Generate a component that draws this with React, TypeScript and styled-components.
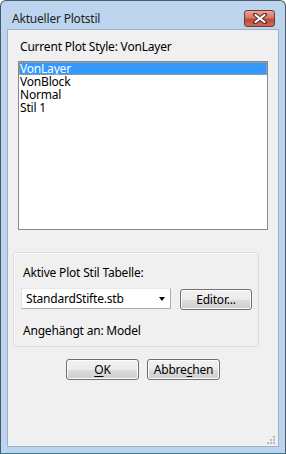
import styled, { createGlobalStyle } from "styled-components";

const GlobalStyle = createGlobalStyle`
  html, body {
    margin: 0;
    padding: 0;
    background: #ffffff;
  }
  body {
    font-family: "Noto Sans", "Open Sans", sans-serif;
    font-size: 12px;
    color: #000000;
  }
`;

const StyledWindow = styled.div`
  box-sizing: border-box;
  width: 286px;
  height: 454px;
  display: flex;
  flex-direction: column;
  padding: 0 6px 6px 6px;
  background: #bcd4ed;
  border: 1px solid #4b5866;
  border-bottom-color: #2f7f8c;
  border-radius: 6px 6px 0 0;
`;

const TitleBar = styled.div`
  height: 28px;
  display: flex;
  align-items: flex-start;
  .title {
    padding: 10px 0 0 5px;
    font-size: 12px;
    line-height: 15px;
    color: #1e1e1e;
    letter-spacing: -0.2px;
  }
`;

const CloseButton = styled.div`
  box-sizing: border-box;
  margin: 9px 4px 0 auto;
  width: 31px;
  height: 17px;
  border: 1px solid #6e3a33;
  border-radius: 3px;
  background: linear-gradient(#e8a596 0%, #d67866 45%, #c1473a 55%, #cf6a55 100%);
  display: flex;
  align-items: center;
  justify-content: center;
`;

const Client = styled.div`
  position: relative;
  flex: 1;
  display: flex;
  flex-direction: column;
  background: #f0f0f0;
  border: 1px solid #9db3cb;
`;

const Label = styled.div<{ $indent: number; $top: number }>`
  padding-left: ${(p) => p.$indent}px;
  margin-top: ${(p) => p.$top}px;
  line-height: 15px;
  letter-spacing: -0.2px;
  white-space: nowrap;
`;

const ListBox = styled.div`
  box-sizing: border-box;
  margin: 7px 10px 0 10px;
  height: 169px;
  background: #ffffff;
  border: 1px solid #828790;
  padding-top: 0;
`;

const ListItem = styled.div<{ $selected?: boolean }>`
  box-sizing: border-box;
  height: 13px;
  line-height: 13px;
  padding-left: 1px;
  letter-spacing: -0.2px;
  color: ${(p) => (p.$selected ? "#ffffff" : "#000000")};
  background: ${(p) => (p.$selected ? "#3399ff" : "transparent")};
  outline: ${(p) => (p.$selected ? "1px dotted #e8a040" : "none")};
  outline-offset: -1px;
`;

const GroupBox = styled.div`
  box-sizing: border-box;
  margin: 22px 0 0 5px;
  width: 246px;
  height: 95px;
  border: 1px solid #d5dfe5;
  box-shadow: inset 1px 1px 0 #ffffff;
  border-radius: 3px;
  display: flex;
  flex-direction: column;
`;

const ComboRow = styled.div`
  display: flex;
  align-items: flex-start;
  margin: 8px 0 0 7px;
  gap: 9px;
`;

const ComboBox = styled.div`
  box-sizing: border-box;
  width: 150px;
  height: 21px;
  background: #ffffff;
  border: 1px solid #abadb3;
  border-top-color: #e3e9ef;
  border-left-color: #e2e3ea;
  display: flex;
  align-items: center;
  padding: 0 5px 0 4px;
  letter-spacing: -0.2px;
  .arrow {
    margin-left: auto;
    width: 0;
    height: 0;
    border-left: 3.5px solid transparent;
    border-right: 3.5px solid transparent;
    border-top: 4px solid #000000;
  }
`;

const Button = styled.button<{ $width?: number }>`
  box-sizing: border-box;
  width: ${(p) => p.$width ?? 73}px;
  height: 21px;
  padding: 0;
  margin: 0;
  font-family: inherit;
  font-size: 12px;
  letter-spacing: -0.2px;
  color: #000000;
  border: 1px solid #707070;
  border-radius: 3px;
  background: linear-gradient(#f2f2f2 0%, #ebebeb 50%, #dddddd 51%, #cfcfcf 100%);
  box-shadow: inset 0 0 0 1px #fcfcfc;
  u {
    text-decoration-thickness: 1px;
    text-underline-offset: 2px;
  }
`;

const ButtonRow = styled.div`
  display: flex;
  justify-content: center;
  gap: 8px;
  margin-top: 12px;
`;

const Grip = styled.svg`
  position: absolute;
  right: 2px;
  bottom: 1px;
`;

const items = ["VonLayer", "VonBlock", "Normal", "Stil 1"];

export default function App() {
  return (
    <>
      <GlobalStyle />
      <StyledWindow>
        <TitleBar>
          <div className="title">Aktueller Plotstil</div>
          <CloseButton>
            <svg width="14" height="11" viewBox="0 0 14 11">
              <path
                d="M2 1.5 L12 9.5 M12 1.5 L2 9.5"
                stroke="#5a2a24"
                strokeWidth="4"
                strokeLinecap="round"
              />
              <path
                d="M2.5 2 L11.5 9 M11.5 2 L2.5 9"
                stroke="#ffffff"
                strokeWidth="2.2"
                strokeLinecap="round"
              />
            </svg>
          </CloseButton>
        </TitleBar>
        <Client>
          <Label $indent={12} $top={9}>
            Current Plot Style: VonLayer
          </Label>
          <ListBox>
            {items.map((item, i) => (
              <ListItem key={item} $selected={i === 0}>
                {item}
              </ListItem>
            ))}
          </ListBox>
          <GroupBox>
            <Label $indent={9} $top={12}>
              Aktive Plot Stil Tabelle:
            </Label>
            <ComboRow>
              <ComboBox>
                <span>StandardStifte.stb</span>
                <span className="arrow" />
              </ComboBox>
              <Button $width={72} style={{ marginTop: 1 }}>
                Editor...
              </Button>
            </ComboRow>
            <Label $indent={9} $top={13}>
              Angehängt an: Model
            </Label>
          </GroupBox>
          <ButtonRow>
            <Button>
              <u>O</u>K
            </Button>
            <Button>
              Abbre<u>c</u>hen
            </Button>
          </ButtonRow>
          <Grip width="10" height="10" viewBox="0 0 10 10">
            {[
              [7, 1],
              [7, 4],
              [4, 4],
              [7, 7],
              [4, 7],
              [1, 7],
            ].map(([x, y]) => (
              <rect key={`${x}-${y}`} x={x} y={y} width="2" height="2" fill="#b8b8b8" />
            ))}
          </Grip>
        </Client>
      </StyledWindow>
    </>
  );
}
